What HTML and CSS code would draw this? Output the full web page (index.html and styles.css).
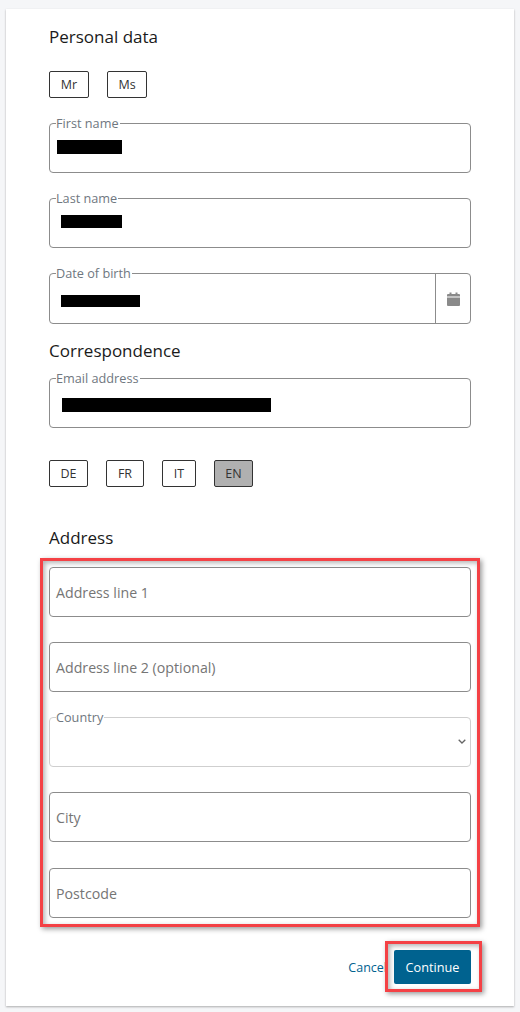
FILE: index.html
```html
<!DOCTYPE html>
<html>

<head>
    <title>Personal data</title>
    <meta charset="utf-8">
    <meta name="viewport" content="width=device-width, initial-scale=1.0">

    <link rel="stylesheet" href="styles.css">
</head>

<body>

    <main class="card">

        <h2>Personal data</h2>

        <div class="choices choices-salutation">
            <button class="choice choice-mr">Mr</button>
            <button class="choice choice-ms">Ms</button>
        </div>

        <div class="field field-first">
            <span class="label">First name</span>
            <span class="hidden-value hv-first"></span>
        </div>

        <div class="field field-next">
            <span class="label">Last name</span>
            <span class="hidden-value hv-last"></span>
        </div>

        <div class="field field-next field-date">
            <span class="label">Date of birth</span>
            <span class="hidden-value hv-date"></span>
            <div class="date-button">
                <svg width="13" height="14" viewBox="0 0 13 14">
                    <path fill="#8a8a8a" d="M0 5.500h13V13a1 1 0 0 1-1 1H1a1 1 0 0 1-1-1zM1 2h1.500V.500h2V2h4V.500h2V2H12a1 1 0 0 1 1 1v1.500H0V3a1 1 0 0 1 1-1z" />
                </svg>
            </div>
        </div>

        <h2 class="title-correspondence">Correspondence</h2>

        <div class="field field-email">
            <span class="label">Email address</span>
            <span class="hidden-value hv-email"></span>
        </div>

        <div class="choices choices-language">
            <button class="choice choice-de">DE</button>
            <button class="choice choice-fr">FR</button>
            <button class="choice choice-it">IT</button>
            <button class="choice choice-en valgt">EN</button>
        </div>

        <h2 class="title-address">Address</h2>

        <div class="address marked">
            <div class="field"><span class="placeholder">Address line 1</span></div>
            <div class="field field-gap"><span class="placeholder">Address line 2 (optional)</span></div>
            <div class="field field-gap field-disabled">
                <span class="label">Country</span>
                <svg class="chevron" width="8" height="5" viewBox="0 0 8 5">
                    <path fill="none" stroke="#666" stroke-width="1.300" d="M.7.700L4 4l3.300-3.300" />
                </svg>
            </div>
            <div class="field field-gap"><span class="placeholder">City</span></div>
            <div class="field field-gap field-last"><span class="placeholder">Postcode</span></div>
        </div>

        <div class="actions">
            <a class="cancel" href="#">Cancel</a>
            <button class="continue marked">Continue</button>
        </div>

    </main>

</body>

</html>
```

FILE: styles.css
```css
* {
    box-sizing: border-box;
}

body {
    margin: 0;
    height: 1012px;
    padding: 9px 6px 0;
    background-color: #f5f6f8;
    font-family: "Open Sans", sans-serif;
    overflow: hidden;
}

.card {
    height: 997px;
    padding: 15px 43px 0;
    background-color: #fff;
    box-shadow: 0 1px 2px rgba(0, 0, 0, 0.3);
}

h2 {
    margin: 0;
    height: 26px;
    font-size: 17px;
    line-height: 26px;
    font-weight: 400;
    color: #1a1a1a;
}

.title-correspondence {
    margin-top: 14px;
}

.title-address {
    margin-top: 38px;
}

.choices {
    display: flex;
    gap: 18px;
}

.choices-salutation {
    margin-top: 21px;
}

.choices-language {
    margin-top: 32px;
}

.choice {
    height: 27px;
    padding: 0;
    background-color: #fff;
    border: 1px solid #333;
    border-radius: 2px;
    font-family: inherit;
    font-size: 12.500px;
    color: #333;
}

.choice-mr,
.choice-ms {
    width: 40px;
}

.choice-de {
    width: 39px;
}

.choice-fr {
    width: 38px;
}

.choice-it {
    width: 34px;
}

.choice-en {
    width: 39px;
}

.valgt {
    background-color: #b0b0b0;
}

.field {
    position: relative;
    height: 50px;
    background-color: #fff;
    border: 1px solid #8c8c8c;
    border-radius: 4px;
}

.field-first,
.field-next,
.field-gap {
    margin-top: 25px;
}

.field-date {
    height: 51px;
}

.field-email {
    margin-top: 14px;
}

.field-last {
    margin-top: 26px;
}

.field-disabled {
    border-color: #cfcfcf;
}

.label {
    position: absolute;
    left: 6px;
    top: -9px;
    padding-right: 1px;
    background-color: #fff;
    font-size: 12.700px;
    line-height: 17px;
    color: #6f7780;
}

.placeholder {
    display: block;
    padding-left: 6px;
    font-size: 14.200px;
    line-height: 50px;
    color: #757575;
}

.hidden-value {
    position: absolute;
    background-color: #000;
}

.hv-first {
    left: 7px;
    top: 16px;
    width: 65px;
    height: 14px;
}

.hv-last {
    left: 11px;
    top: 16px;
    width: 61px;
    height: 13px;
}

.hv-date {
    left: 11px;
    top: 21px;
    width: 79px;
    height: 12px;
}

.hv-email {
    left: 12px;
    top: 19px;
    width: 209px;
    height: 14px;
}

.date-button {
    position: absolute;
    right: 0;
    top: 0;
    bottom: 0;
    width: 35px;
    display: flex;
    align-items: center;
    justify-content: center;
    border-left: 1px solid #8c8c8c;
}

.chevron {
    position: absolute;
    right: 4px;
    top: 21px;
}

.address {
    margin-top: 16px;
}

.marked {
    position: relative;
}

.marked::after {
    content: "";
    position: absolute;
    pointer-events: none;
    border: 3px solid #f44145;
    box-shadow: 2px 2px 5px rgba(0, 0, 0, 0.4), inset 2px 2px 5px rgba(0, 0, 0, 0.3);
}

.address::after {
    top: -9px;
    left: -9px;
    right: -9px;
    bottom: -9px;
}

.actions {
    display: flex;
    justify-content: flex-end;
    align-items: center;
    margin-top: 32px;
}

.cancel {
    margin-right: 7px;
    font-size: 12.500px;
    color: #00628f;
    text-decoration: none;
}

.continue {
    width: 77px;
    height: 34px;
    padding: 0;
    background-color: #00628f;
    border: none;
    border-radius: 2px;
    font-family: inherit;
    font-size: 12.700px;
    color: #fff;
}

.continue::after {
    top: -9px;
    left: -9px;
    right: -11px;
    bottom: -8px;
}
```
